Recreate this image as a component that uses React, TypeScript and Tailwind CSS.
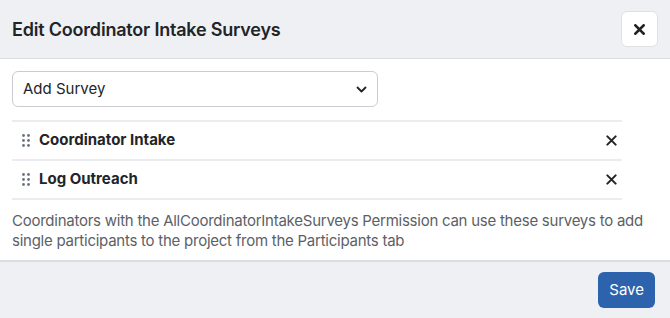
import React from "react";

function Grip() {
  return (
    <svg width="8" height="13" viewBox="0 0 8 13" className="text-gray-500">
      {[1.5, 6.5].map((x) =>
        [1.5, 6.5, 11.5].map((y) => <circle key={`${x}-${y}`} cx={x} cy={y} r="1.4" fill="currentColor" />)
      )}
    </svg>
  );
}

function XIcon({ size = 12, stroke = 2.4 }: { size?: number; stroke?: number }) {
  return (
    <svg width={size} height={size} viewBox="0 0 12 12">
      <path d="M1.5 1.5 L10.5 10.5 M10.5 1.5 L1.5 10.5" stroke="#222" strokeWidth={stroke} strokeLinecap="round" />
    </svg>
  );
}

const surveys = ["Coordinator Intake", "Log Outreach"];

export default function App() {
  return (
    <div className="flex h-[318px] w-[670px] flex-col bg-white text-[#212529]" style={{ fontFamily: "Inter, 'Noto Sans', sans-serif" }}>
      <div className="flex h-[59px] shrink-0 items-center justify-between border-b border-[#dcdde1] bg-[#eff0f4] pl-3 pr-3">
        <h2 className="text-[18px] font-semibold tracking-[-0.2px]">Edit Coordinator Intake Surveys</h2>
        <button type="button" className="flex h-[36px] w-[37px] items-center justify-center rounded-md border border-[#dee0e4] bg-white">
          <XIcon size={11} stroke={3} />
        </button>
      </div>

      <div className="flex-1 px-3 pt-3">
        <div className="flex h-[36px] w-[366px] items-center justify-between rounded-md border border-[#c9ccd1] bg-white px-[10px]">
          <span className="text-[15px]">Add Survey</span>
          <svg width="11" height="7" viewBox="0 0 11 7">
            <path d="M1.5 1.5 L5.5 5.5 L9.5 1.5" fill="none" stroke="#222" strokeWidth="1.8" strokeLinecap="round" strokeLinejoin="round" />
          </svg>
        </div>

        <ul className="mt-[13px] w-[610px] border-t-2 border-[#ebecef]">
          {surveys.map((s) => (
            <li key={s} className="flex h-[39px] items-center justify-between border-b-2 border-[#ebecef] pl-[10px] pr-[5px]">
              <div className="flex items-center gap-[9px]">
                <Grip />
                <span className="text-[15px] font-bold">{s}</span>
              </div>
              <XIcon size={11} stroke={2.2} />
            </li>
          ))}
        </ul>

        <p className="mt-[11px] text-[15px] leading-[20px] tracking-[-0.25px] text-[#5c5f66]">
          Coordinators with the AllCoordinatorIntakeSurveys Permission can use these surveys to add single participants to the project from the Participants tab
        </p>
      </div>

      <div className="flex h-[58px] shrink-0 items-center justify-end border-t-2 border-[#dcdde1] bg-[#eff0f4] pr-[15px]">
        <button type="button" className="h-[36px] rounded-md bg-[#2d63ac] px-[11px] text-[15px] text-white">
          Save
        </button>
      </div>
    </div>
  );
}
